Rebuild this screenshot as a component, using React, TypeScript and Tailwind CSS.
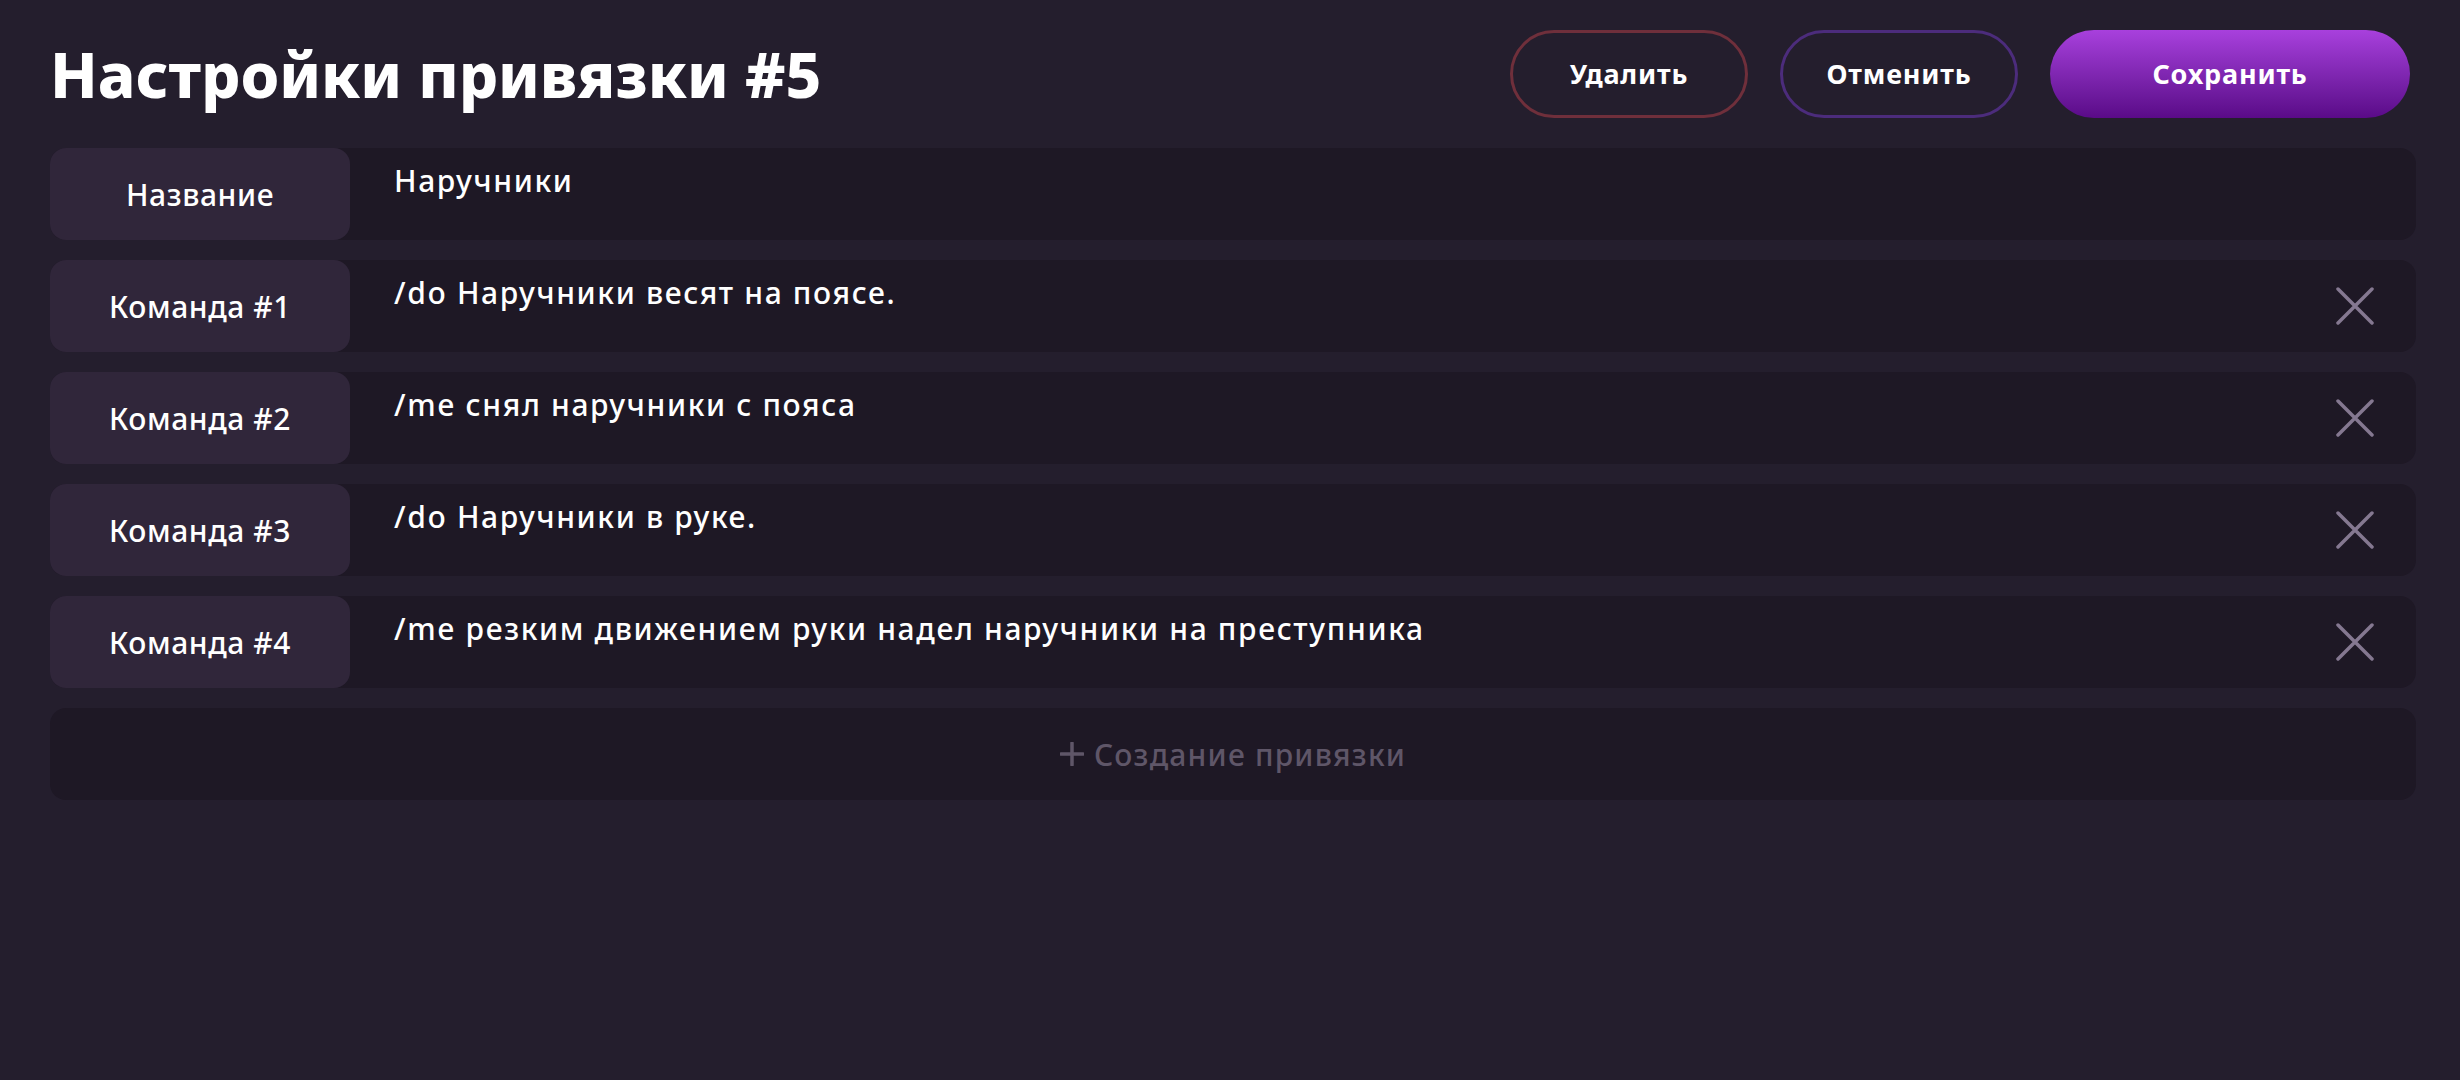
const commands = [
  '/do Наручники весят на поясе.',
  '/me снял наручники с пояса',
  '/do Наручники в руке.',
  '/me резким движением руки надел наручники на преступника',
]

function CloseIcon() {
  return (
    <svg width="38" height="38" viewBox="0 0 38 38" fill="none">
      <path d="M2 2L36 36M36 2L2 36" stroke="#857891" strokeWidth="3.5" strokeLinecap="round" />
    </svg>
  )
}

function Row({ label, value, removable }: { label: string; value: string; removable?: boolean }) {
  return (
    <div className="flex h-[92px] rounded-[16px] bg-[#1e1825]">
      <div className="w-[300px] flex-shrink-0 rounded-[16px] bg-[#30263a] flex items-center justify-center text-[30px] font-medium text-white tracking-[0.02em]">
        {label}
      </div>
      <div className="flex-1 pl-[44px] pt-[18px] text-[30px] leading-none font-medium text-white tracking-[0.055em]">
        {value}
      </div>
      {removable && (
        <button className="mr-[42px] flex items-center justify-center">
          <CloseIcon />
        </button>
      )}
    </div>
  )
}

export default function App() {
  return (
    <div
      className="w-[2460px] h-[1080px] bg-[#241e2d] pl-[50px] pr-[44px] pt-[30px]"
      style={{ fontFamily: '"Noto Sans", "DejaVu Sans", sans-serif' }}
    >
      <div className="flex items-center justify-between h-[88px] pr-[6px]">
        <h1 className="text-[62px] font-extrabold text-white leading-none">Настройки привязки #5</h1>
        <div className="flex items-center gap-[32px]">
          <button className="w-[238px] h-[88px] rounded-full border-[3px] border-[#6f2f3b] text-white text-[27px] font-bold tracking-[0.03em]">
            Удалить
          </button>
          <button className="w-[238px] h-[88px] rounded-full border-[3px] border-[#4c2c7c] text-white text-[27px] font-bold tracking-[0.03em]">
            Отменить
          </button>
          <button className="w-[360px] h-[88px] rounded-full bg-gradient-to-b from-[#a840dd] to-[#5a0a88] text-white text-[27px] font-bold tracking-[0.03em]">
            Сохранить
          </button>
        </div>
      </div>

      <div className="mt-[30px] flex flex-col gap-[20px]">
        <Row label="Название" value="Наручники" />
        {commands.map((c, i) => (
          <Row key={i} label={`Команда #${i + 1}`} value={c} removable />
        ))}
        <button className="h-[92px] rounded-[16px] bg-[#1e1825] flex items-center justify-center gap-[10px] text-[30px] font-medium text-[#5f5668] tracking-[0.04em]">
          <svg width="24" height="24" viewBox="0 0 24 24" fill="none">
            <path d="M12 1V23M1 12H23" stroke="#5f5668" strokeWidth="3.5" strokeLinecap="round" />
          </svg>
          Создание привязки
        </button>
      </div>
    </div>
  )
}
